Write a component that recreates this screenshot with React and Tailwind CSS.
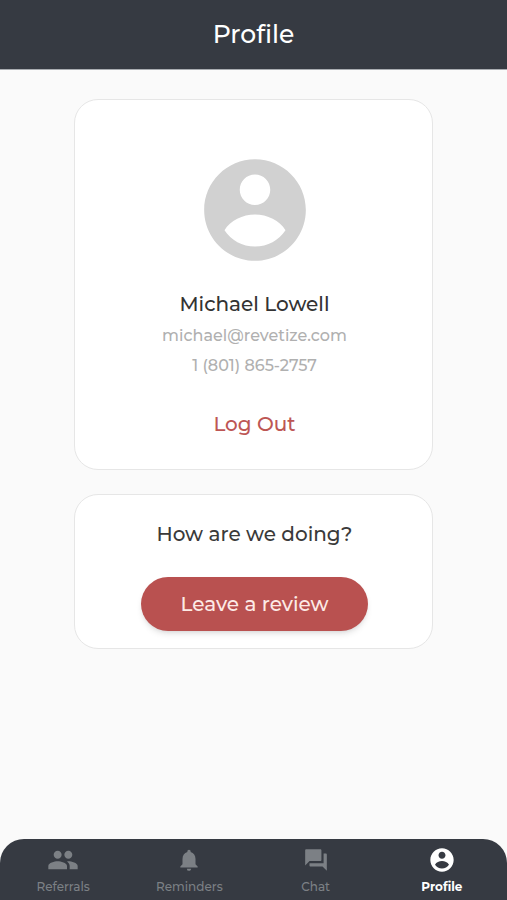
import { useState } from 'react';
import { MdPeople, MdNotifications, MdForum } from 'react-icons/md';

function AccountIcon({ className }) {
  return (
    <svg viewBox="0 0 24 24" fill="currentColor" aria-hidden="true" className={className}>
      <path d="M12 2C6.48 2 2 6.48 2 12s4.48 10 10 10 10-4.48 10-10S17.52 2 12 2zm0 3c1.66 0 3 1.34 3 3s-1.34 3-3 3-3-1.34-3-3 1.34-3 3-3zm0 14.2c-2.5 0-4.71-1.28-6-3.22 1.1-1.9 3.6-3.08 6-3.08s4.9 1.18 6 3.08c-1.29 1.94-3.5 3.22-6 3.22z" />
    </svg>
  );
}

const tabs = [
  { name: 'Referrals', Icon: MdPeople, iconSize: 'size-8' },
  { name: 'Reminders', Icon: MdNotifications, iconSize: 'size-[26px]' },
  { name: 'Chat', Icon: MdForum, iconSize: 'size-[26px]' },
  { name: 'Profile', Icon: AccountIcon, iconSize: 'size-7' },
];

function TabBar({ active, onSelect }) {
  return (
    <nav className="grid grid-cols-4 rounded-t-3xl bg-[#363a42] pt-[3px] pr-0.5">
      {tabs.map(({ name, Icon, iconSize }) => (
        <button
          key={name}
          type="button"
          onClick={() => onSelect(name)}
          className={`flex flex-col items-center pb-[5px] text-xs ${
            active === name ? 'font-bold text-white' : 'font-medium text-[#7c8085]'
          }`}
        >
          <span className="flex h-9 items-center">
            <Icon className={iconSize} />
          </span>
          <span className="pt-px leading-4">{name}</span>
        </button>
      ))}
    </nav>
  );
}

export default function App() {
  const [active, setActive] = useState('Profile');

  return (
    <div className="flex min-h-screen flex-col bg-[#fafafa] font-[Montserrat,Inter,sans-serif]">
      <header className="border-b border-[#a9acb1] bg-[#363a42] pt-4 pb-[17px]">
        <h1 className="text-center text-[25px] leading-9 font-medium text-white">Profile</h1>
      </header>

      <main className="mx-auto flex w-[71%] flex-1 flex-col gap-6 py-[29px]">
        <section className="flex flex-col items-center rounded-3xl border border-[#e6e6e6] bg-white pt-[49px] pb-[29px] pl-0.5">
          <AccountIcon className="size-[122px] text-[#d1d1d1]" />
          <h2 className="mt-[17px] text-xl leading-8 font-medium text-[#333333]">Michael Lowell</h2>
          <p className="text-base leading-8 font-medium text-[#b0b0b0]">michael@revetize.com</p>
          <p className="text-base leading-7 font-medium text-[#b0b0b0]">1 (801) 865-2757</p>
          <button type="button" className="mt-7 text-xl leading-8 font-medium text-[#bd5654]">
            Log Out
          </button>
        </section>

        <section className="flex flex-col items-center gap-[27px] rounded-3xl border border-[#e6e6e6] bg-white pt-[23px] pb-[17px] pl-0.5">
          <h2 className="text-xl leading-8 font-medium text-[#3a3a3a]">How are we doing?</h2>
          <button
            type="button"
            className="rounded-full bg-[#b95150] px-[39px] py-[11px] text-xl leading-8 font-medium text-[#fdeae6] shadow-md"
          >
            Leave a review
          </button>
        </section>
      </main>

      <TabBar active={active} onSelect={setActive} />
    </div>
  );
}
